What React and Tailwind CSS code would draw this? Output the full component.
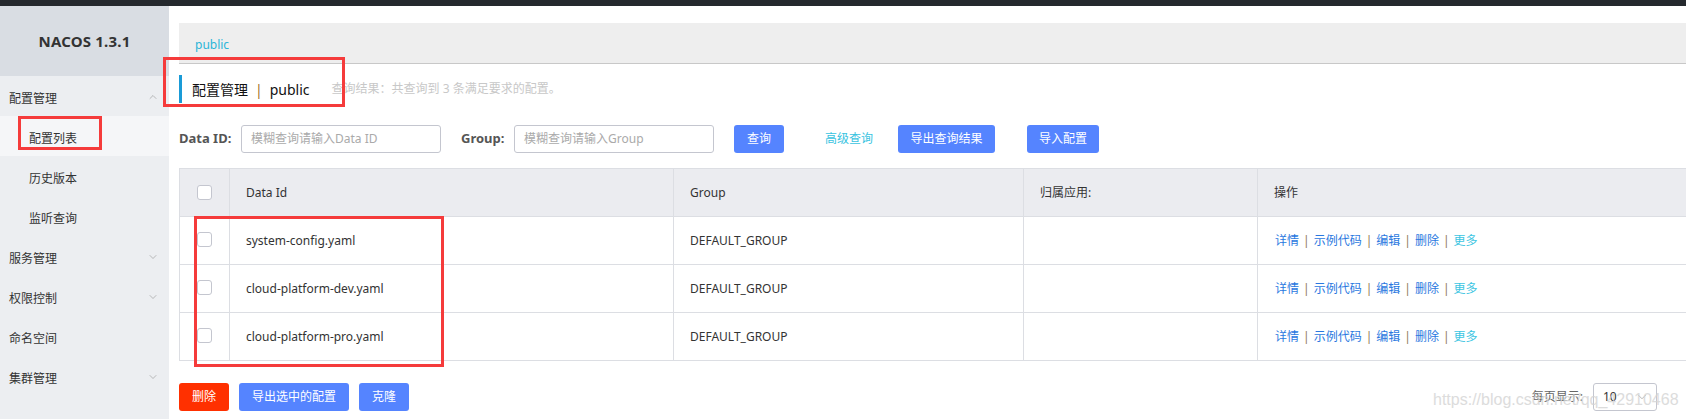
import { ChevronUp, ChevronDown } from 'lucide-react';

const FONT = { fontFamily: "'Noto Sans', 'Noto Sans CJK SC', sans-serif" };

const menu = [
  { label: '配置管理', level: 0, icon: 'up' },
  { label: '配置列表', level: 1, active: true },
  { label: '历史版本', level: 1 },
  { label: '监听查询', level: 1 },
  { label: '服务管理', level: 0, icon: 'down' },
  { label: '权限控制', level: 0, icon: 'down' },
  { label: '命名空间', level: 0 },
  { label: '集群管理', level: 0, icon: 'down' },
];

const rows = ['system-config.yaml', 'cloud-platform-dev.yaml', 'cloud-platform-pro.yaml'];

const cols = 'grid grid-cols-[50px_444px_350px_234px_1fr]';

function Checkbox() {
  return <span className="block w-[15px] h-[15px] rounded-[3px] border border-[#c4c6cf] bg-white" />;
}

function Sep() {
  return <span className="mx-[4px] text-[#8f7a55]">|</span>;
}

export default function App() {
  return (
    <div className="relative w-[1686px] h-[419px] overflow-hidden bg-white text-[#333]" style={FONT}>
      <div className="h-[6px] bg-[#25292e]" />
      <div className="flex h-[413px]">
        {/* 侧边栏 */}
        <aside className="w-[169px] shrink-0 bg-[#eceef1]">
          <div className="h-[70px] bg-[#d9dde3] flex items-center justify-center text-[15px] font-bold text-[#333] tracking-[0.2px]">
            NACOS 1.3.1
          </div>
          {menu.map((m) => (
            <div
              key={m.label}
              className={`h-[40px] flex items-center justify-between text-[12px] pr-[10px] pt-[6px] ${
                m.level ? 'pl-[29px]' : 'pl-[9px]'
              } ${m.active ? 'bg-[#f5f6f8]' : ''}`}
            >
              <span>{m.label}</span>
              {m.icon === 'up' && <ChevronUp size={12} strokeWidth={1.3} className="text-[#999] -mt-[4px]" />}
              {m.icon === 'down' && <ChevronDown size={12} strokeWidth={1.3} className="text-[#999] -mt-[4px]" />}
            </div>
          ))}
        </aside>

        {/* 主体 */}
        <main className="flex-1 pl-[10px] pt-[17px]">
          <div className="h-[41px] bg-[#eeeeee] border-b border-[#c8c8c8] pl-[16px] pt-[4px] flex items-center text-[12px] text-[#2bb5d8]">
            public
          </div>

          <div className="mt-[11px] h-[28px] border-l-[3px] border-[#1a9bd7] pl-[10px] flex items-center">
            <span className="text-[14px] text-[#111]">配置管理</span>
            <span className="text-[14px] mx-[7px] text-[#a0701f]">|</span>
            <span className="text-[14px] text-[#111]">public</span>
            <span className="ml-[22px] text-[12px] text-[#c8c8c8]">查询结果：共查询到 3 条满足要求的配置。</span>
          </div>

          <div className="mt-[22px] h-[28px] flex items-center text-[12px]">
            <span className="w-[62px] font-bold text-[13px] text-[#555]">Data ID:</span>
            <div className="w-[200px] h-[28px] border border-[#c4c6cf] rounded-[3px] flex items-center pl-[9px] text-[#aaa]">
              模糊查询请输入Data ID
            </div>
            <span className="ml-[20px] w-[53px] font-bold text-[13px] text-[#555]">Group:</span>
            <div className="w-[200px] h-[28px] border border-[#c4c6cf] rounded-[3px] flex items-center pl-[9px] text-[#aaa]">
              模糊查询请输入Group
            </div>
            <button className="ml-[20px] w-[50px] h-[28px] rounded-[3px] bg-[#5584ff] text-white">查询</button>
            <span className="ml-[41px] text-[#38c3df]">高级查询</span>
            <button className="ml-[25px] w-[97px] h-[28px] rounded-[3px] bg-[#5584ff] text-white">导出查询结果</button>
            <button className="ml-[32px] w-[72px] h-[28px] rounded-[3px] bg-[#5584ff] text-white">导入配置</button>
          </div>

          <div className="mt-[15px] border border-[#dcdee3] border-r-0 text-[12px]">
            <div className={`${cols} h-[47px] bg-[#ebecf0]`}>
              <div className="flex items-center justify-center border-r border-[#dcdee3]">
                <Checkbox />
              </div>
              <div className="flex items-center pl-[16px] border-r border-[#dcdee3]">Data Id</div>
              <div className="flex items-center pl-[16px] border-r border-[#dcdee3]">Group</div>
              <div className="flex items-center pl-[16px] border-r border-[#dcdee3]">归属应用:</div>
              <div className="flex items-center pl-[16px]">操作</div>
            </div>
            {rows.map((r) => (
              <div key={r} className={`${cols} h-[48px] border-t border-[#dcdee3]`}>
                <div className="flex items-center justify-center border-r border-[#dcdee3] pb-[3px]">
                  <Checkbox />
                </div>
                <div className="flex items-center pl-[16px] border-r border-[#dcdee3]">{r}</div>
                <div className="flex items-center pl-[16px] border-r border-[#dcdee3]">DEFAULT_GROUP</div>
                <div className="border-r border-[#dcdee3]" />
                <div className="flex items-center pl-[17px] text-[#2a78e0]">
                  <span>详情</span>
                  <Sep />
                  <span>示例代码</span>
                  <Sep />
                  <span>编辑</span>
                  <Sep />
                  <span>删除</span>
                  <Sep />
                  <span className="text-[#3cc5e2]">更多</span>
                </div>
              </div>
            ))}
          </div>

          <div className="mt-[22px] flex items-center justify-between pr-[29px] text-[12px]">
            <div className="flex gap-[10px]">
              <button className="w-[50px] h-[28px] rounded-[3px] bg-[#ff3000] text-white">删除</button>
              <button className="w-[110px] h-[28px] rounded-[3px] bg-[#5584ff] text-white">导出选中的配置</button>
              <button className="w-[50px] h-[28px] rounded-[3px] bg-[#5584ff] text-white">克隆</button>
            </div>
            <div className="flex items-center gap-[10px]">
              <span className="text-[#666]">每页显示:</span>
              <div className="w-[64px] h-[28px] border border-[#c4c6cf] rounded-[3px] flex items-center justify-between pl-[9px] pr-[7px]">
                <span className="text-[#333]">10</span>
                <ChevronDown size={14} strokeWidth={1.2} className="text-[#999]" />
              </div>
            </div>
          </div>
        </main>
      </div>

      {/* 标注红框 */}
      <div className="absolute left-[163px] top-[57px] w-[182px] h-[50px] border-[3px] border-[#f53b3b]" />
      <div className="absolute left-[18px] top-[116px] w-[84px] h-[34px] border-[3px] border-[#f53b3b]" />
      <div className="absolute left-[194px] top-[216px] w-[250px] h-[151px] border-[3px] border-[#f53b3b]" />

      {/* 水印 */}
      <div
        className="absolute left-[1433px] top-[388px] text-[16px] text-[#d4d4d4] opacity-80 pointer-events-none"
        style={{ fontFamily: "'Liberation Sans', Arial, sans-serif" }}
      >
        https://blog.csdn.net/qq_42910468
      </div>
    </div>
  );
}
